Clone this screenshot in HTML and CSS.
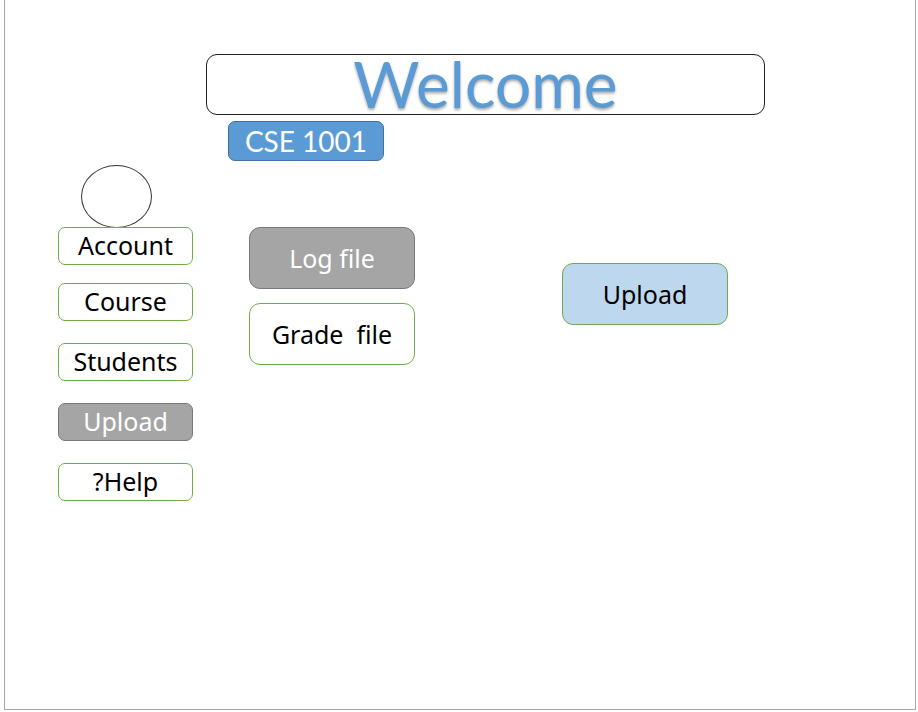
FILE: index.html
```html
<!DOCTYPE html>
<html lang="en">
<head>
<meta charset="utf-8">
<meta name="viewport" content="width=device-width, initial-scale=1">
<title>Welcome - CSE 1001</title>
<link rel="stylesheet" href="styles.css">
</head>
<body>
<div class="frame">
  <header class="header">
    <h1 class="banner">Welcome</h1>
    <button type="button" class="button course-tag">CSE 1001</button>
  </header>
  <div class="content">
    <nav class="sidebar" aria-label="Main">
      <div class="avatar"></div>
      <div class="nav-group">
        <button type="button" class="button nav-item">Account</button>
        <button type="button" class="button nav-item">Course</button>
      </div>
      <button type="button" class="button nav-item">Students</button>
      <button type="button" class="button nav-item selected">Upload</button>
      <button type="button" class="button nav-item">?Help</button>
    </nav>
    <main class="workspace">
      <div class="files">
        <button type="button" class="button large selected">Log file</button>
        <button type="button" class="button large spaced">Grade  file</button>
      </div>
      <div class="actions">
        <button type="button" class="button large primary">Upload</button>
      </div>
    </main>
  </div>
</div>
</body>
</html>
```

FILE: styles.css
```css
* {
  box-sizing: border-box;
}

body {
  margin: 0;
  background: #fff;
  color: #000;
  font-family: "Noto Sans", "Open Sans", sans-serif;
}

.frame {
  min-height: calc(100vh - 2px);
  margin: 0 2px 2px 4px;
  padding-top: 54px;
  border: 1px solid #a6a6a6;
  border-top: 0;
}

.header {
  margin: 0 150px 0 201px;
}

.banner {
  margin: 0;
  height: 61px;
  border: 1px solid #222;
  border-radius: 11px;
  color: #5b9bd5;
  font-family: Lato, "Open Sans", sans-serif;
  font-size: 64px;
  font-weight: 400;
  line-height: 58px;
  text-align: center;
  text-shadow: 0 2px 3px rgba(0, 0, 0, 0.35);
}

.button {
  display: block;
  padding: 0 0 2px;
  border: 1px solid #70ad47;
  border-radius: 7px;
  background: #fff;
  color: #000;
  font: inherit;
  font-size: 25px;
  line-height: 34px;
  text-align: center;
  cursor: pointer;
}

.course-tag {
  width: 156px;
  height: 40px;
  margin: 6px 0 0 22px;
  padding: 0;
  border-color: #41719c;
  background: #5b9bd5;
  color: #fff;
  font-family: Lato, "Open Sans", sans-serif;
  font-size: 28px;
}

.content {
  display: grid;
  grid-template-columns: 135fr 722fr;
  margin: 4px 0 0 53px;
}

.sidebar {
  display: flex;
  flex-direction: column;
  gap: 22px;
}

.avatar {
  width: 71px;
  height: 63px;
  margin: 0 0 -23px 23px;
  border: 1px solid #333;
  border-radius: 50%;
}

.nav-group {
  display: grid;
  gap: 18px;
}

.nav-item {
  width: 100%;
  height: 38px;
}

.selected {
  border-color: #787878;
  background: #a5a5a5;
  color: #fff;
}

.workspace {
  display: grid;
  grid-template-columns: 166fr 166fr;
  column-gap: 147px;
  align-items: start;
  margin: 62px 187px 0 56px;
}

.files {
  display: grid;
  gap: 14px;
}

.large {
  width: 100%;
  height: 62px;
  padding: 0;
  border-radius: 11px;
}

.spaced {
  white-space: pre;
}

.actions {
  padding-top: 36px;
}

.primary {
  background: #bdd7ee;
}
```
